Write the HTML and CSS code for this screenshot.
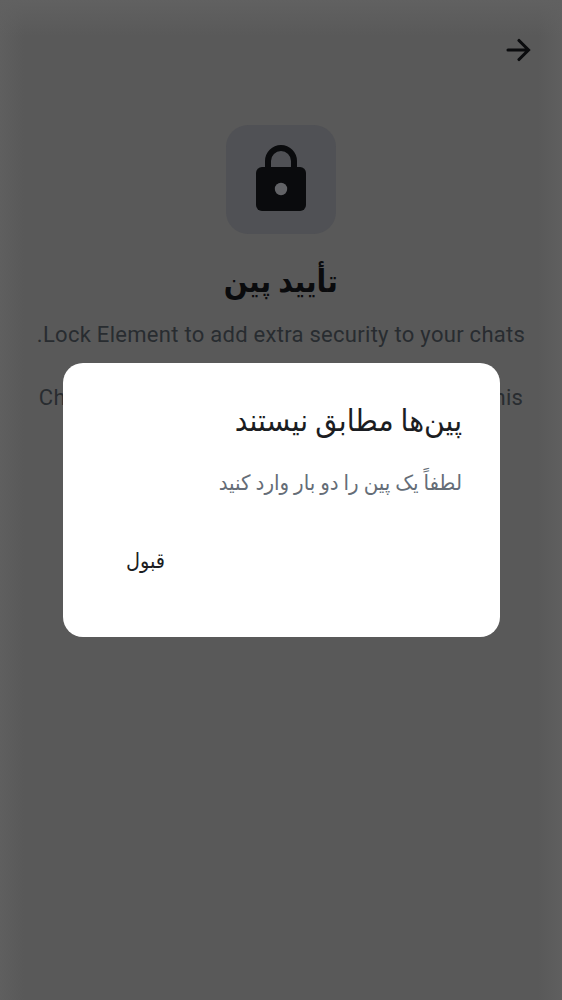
FILE: index.html
```html
<!DOCTYPE html>
<html lang="fa" dir="rtl">
<head>
<meta charset="utf-8">
<title>تأیید پین</title>
<link rel="stylesheet" href="styles.css">
</head>
<body>
<div class="screen">
  <header class="topbar">
    <svg class="back" viewBox="0 0 24 24"><path d="M1.5 12H21M12.5 2.5L22 12l-9.5 9.5" fill="none" stroke="currentColor" stroke-width="3.1" stroke-linecap="round"/></svg>
  </header>
  <main class="content">
    <div class="lock-tile">
      <svg class="lock" viewBox="0 0 50 66"><path d="M12 24V16a13 13 0 0 1 26 0v8" fill="none" stroke="currentColor" stroke-width="6"/><rect y="22" width="50" height="44" rx="6" fill="currentColor"/><circle class="keyhole" cx="25" cy="44" r="6.2"/></svg>
    </div>
    <h1 class="title">تأیید پین</h1>
    <p class="intro">Lock Element to add extra security to your chats.</p>
    <p class="intro second">Choose something memorable. If you forget this</p>
  </main>
</div>
<div class="scrim">
  <section class="dialog" role="alertdialog">
    <h2 class="dialog-title">پین‌ها مطابق نیستند</h2>
    <p class="dialog-text">لطفاً یک پین را دو بار وارد کنید</p>
    <div class="actions"><button class="ok">قبول</button></div>
  </section>
</div>
</body>
</html>
```
FILE: styles.css
```css
* { box-sizing: border-box; margin: 0; }
body { height: 1000px; overflow: hidden; background: #595959; color: #0a0b0d; font-family: Roboto, "Noto Sans", "DejaVu Sans", sans-serif; }
.screen { height: 1000px; background: linear-gradient(to bottom, #616161, rgba(89, 89, 89, 0) 36px), linear-gradient(to right, #5f5f5f, #595959 24px, #595959 calc(100% - 24px), #5f5f5f); }
.topbar { height: 100px; padding: 38px 31px 0; }
.back { display: block; width: 25px; height: 24px; }
.content { display: flex; flex-direction: column; align-items: center; padding-top: 25px; }
.lock-tile { width: 110px; height: 109px; border-radius: 22px; background: #505155; display: flex; justify-content: center; padding-top: 20px; }
.lock { width: 50px; height: 66px; overflow: visible; }
.keyhole { fill: #626366; }
.title { height: 58px; margin-top: 19px; line-height: 58px; font-size: 31px; font-weight: 700; transform: scaleX(.91); }
.intro { margin-top: 8px; line-height: 31px; font-size: 22px; letter-spacing: .28px; color: #282c30; white-space: nowrap; }
.second { margin-top: 32px; }
.scrim { position: absolute; inset: 0; display: flex; justify-content: center; align-items: center; }
.dialog { width: 437px; height: 274px; padding: 29px 38px; border-radius: 20px; background: #fff; }
.dialog-title { height: 58px; line-height: 58px; font-size: 30px; font-weight: 400; color: #1b1d22; transform: scaleX(.942); transform-origin: right; }
.dialog-text { margin-top: 13px; height: 40px; line-height: 40px; font-size: 21px; color: #656d77; transform: scaleX(.947); transform-origin: right; }
.actions { display: flex; justify-content: flex-end; padding-left: 25px; margin-top: 36px; }
.ok { border: 0; padding: 0; background: none; font: inherit; line-height: 44px; font-size: 21px; color: #1b1d22; transform: scaleX(.92); transform-origin: left; }
```
